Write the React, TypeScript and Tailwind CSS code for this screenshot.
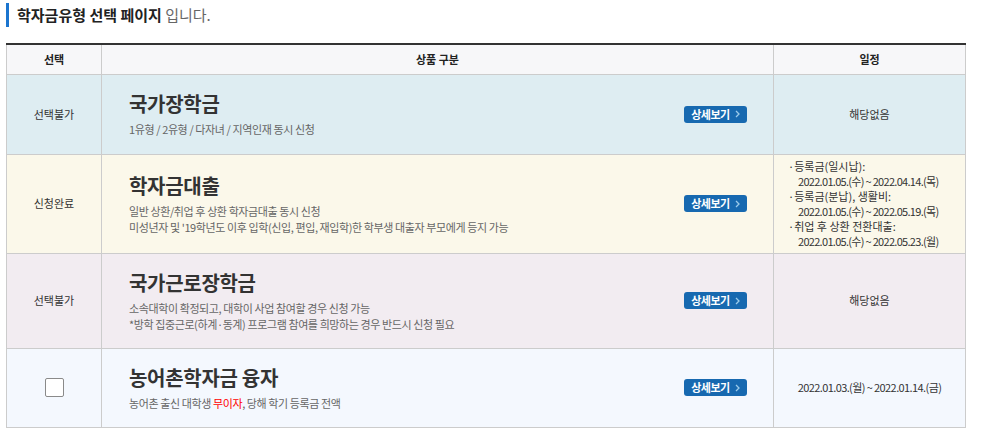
import React from "react";

const font = {
  fontFamily: '"Noto Sans CJK KR", "Noto Sans", sans-serif',
};

function DetailButton() {
  return (
    <button
      type="button"
      className="inline-flex h-[17px] w-[63px] items-center justify-center gap-[5px] rounded-[3px] bg-[#1769b0] text-[11px] font-bold leading-none text-white"
    >
      <span className="tracking-[-0.5px]">상세보기</span>
      <svg width="5" height="8" viewBox="0 0 5 8" aria-hidden="true">
        <path d="M1 1l3 3-3 3" fill="none" stroke="#9ccbea" strokeWidth="1.3" />
      </svg>
    </button>
  );
}

type Row = {
  bg: string;
  h: string;
  status: React.ReactNode;
  title: string;
  desc: React.ReactNode;
  schedule: React.ReactNode;
};

const rows: Row[] = [
  {
    bg: "bg-[#deedf2]",
    h: "h-[80px]",
    status: "선택불가",
    title: "국가장학금",
    desc: <p>1유형 / 2유형 / 다자녀 / 지역인재 동시 신청</p>,
    schedule: <div className="text-center">해당없음</div>,
  },
  {
    bg: "bg-[#fbf8ea]",
    h: "h-[99px]",
    status: "신청완료",
    title: "학자금대출",
    desc: (
      <>
        <p>일반 상환/취업 후 상환 학자금대출 동시 신청</p>
        <p>미성년자 및 '19학년도 이후 입학(신입, 편입, 재입학)한 학부생 대출자 부모에게 등지 가능</p>
      </>
    ),
    schedule: (
      <div className="pl-[14px] leading-[15px]">
        <p>·등록금(일시납):</p>
        <p className="pl-[10px] tracking-[-0.7px]">2022.01.05.(수) ~ 2022.04.14.(목)</p>
        <p>·등록금(분납), 생활비:</p>
        <p className="pl-[10px] tracking-[-0.7px]">2022.01.05.(수) ~ 2022.05.19.(목)</p>
        <p>·취업 후 상환 전환대출:</p>
        <p className="pl-[10px] tracking-[-0.7px]">2022.01.05.(수) ~ 2022.05.23.(월)</p>
      </div>
    ),
  },
  {
    bg: "bg-[#f2ecf1]",
    h: "h-[95px]",
    status: "선택불가",
    title: "국가근로장학금",
    desc: (
      <>
        <p>소속대학이 확정되고, 대학이 사업 참여할 경우 신청 가능</p>
        <p>*방학 집중근로(하계·동계) 프로그램 참여를 희망하는 경우 반드시 신청 필요</p>
      </>
    ),
    schedule: <div className="text-center">해당없음</div>,
  },
  {
    bg: "bg-[#f4f8fe]",
    h: "h-[79px]",
    status: (
      <span className="inline-block h-[19px] w-[19px] rounded-[2px] border border-[#8a8a8a] bg-white align-middle" />
    ),
    title: "농어촌학자금 융자",
    desc: (
      <p>
        농어촌 출신 대학생 <span className="text-[#ff0000]">무이자</span>, 당해 학기 등록금 전액
      </p>
    ),
    schedule: (
      <div className="text-center tracking-[-0.6px]">2022.01.03.(월) ~ 2022.01.14.(금)</div>
    ),
  },
];

export default function App() {
  return (
    <div className="h-[441px] w-[985px] bg-white text-[#333]" style={font}>
      <div className="flex items-center pl-[6px] pt-[3px]">
        <span className="h-[24px] w-[3px] bg-[#1b75cf]" />
        <h2 className="ml-[8px] text-[15px] leading-[24px] font-bold text-[#222]">
          학자금유형 선택 페이지 <span className="font-normal text-[#666]">입니다.</span>
        </h2>
      </div>

      <table className="mt-[16px] ml-[6px] w-[959px] table-fixed border-collapse border-t-2 border-t-[#333] text-[11px]">
        <colgroup>
          <col className="w-[95px]" />
          <col className="w-[672px]" />
          <col className="w-[192px]" />
        </colgroup>
        <thead>
          <tr className="h-[30px] bg-[#f7f7f9] text-[#222]">
            <th className="border border-t-0 border-[#cccccc] font-bold">선택</th>
            <th className="border border-t-0 border-[#cccccc] font-bold">상품 구분</th>
            <th className="border border-t-0 border-[#cccccc] font-bold">일정</th>
          </tr>
        </thead>
        <tbody>
          {rows.map((r) => (
            <tr key={r.title} className={`${r.bg} ${r.h}`}>
              <td className="border border-[#cccccc] text-center">{r.status}</td>
              <td className="border border-[#cccccc] pr-[26px] pl-[27px]">
                <div className="flex items-center justify-between">
                  <div>
                    <h3 className="mb-[4px] text-[20px] leading-[26px] font-bold tracking-[-0.3px] text-[#333]">
                      {r.title}
                    </h3>
                    <div className="leading-[16px] tracking-[-0.4px] text-[#666]">{r.desc}</div>
                  </div>
                  <DetailButton />
                </div>
              </td>
              <td className="border border-[#cccccc] text-[#333]">{r.schedule}</td>
            </tr>
          ))}
        </tbody>
      </table>
    </div>
  );
}
